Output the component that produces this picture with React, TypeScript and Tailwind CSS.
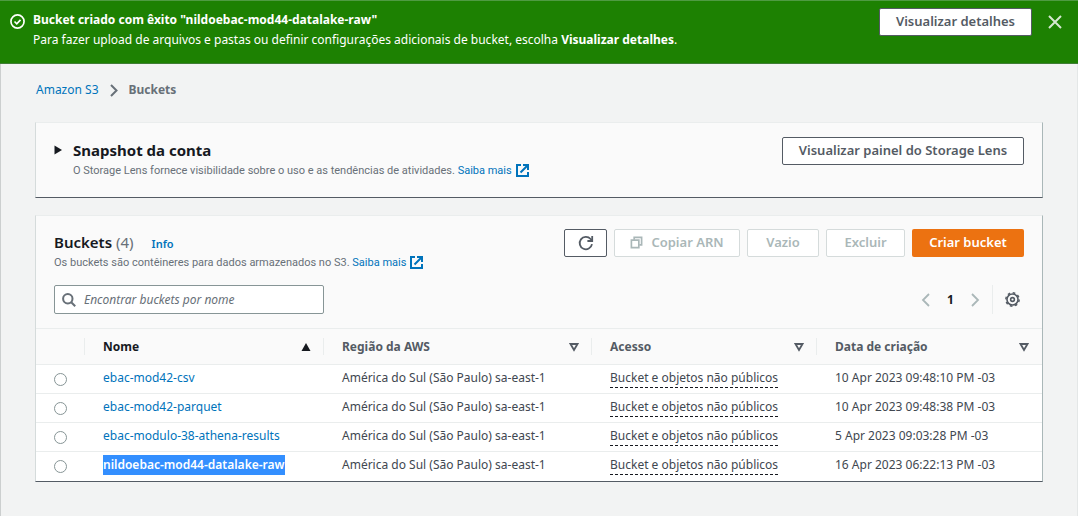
import type { ReactNode } from "react";

type Bucket = { name: string; created: string; selected?: boolean };

const buckets: Bucket[] = [
  { name: "ebac-mod42-csv", created: "10 Apr 2023 09:48:10 PM -03" },
  { name: "ebac-mod42-parquet", created: "10 Apr 2023 09:48:38 PM -03" },
  { name: "ebac-modulo-38-athena-results", created: "5 Apr 2023 09:03:28 PM -03" },
  { name: "nildoebac-mod44-datalake-raw", created: "16 Apr 2023 06:22:13 PM -03", selected: true },
];

function ExternalIcon() {
  return (
    <svg className="ml-1 inline-block size-[13px] align-[-3px]" viewBox="0 0 13 13" fill="none" stroke="currentColor" strokeWidth="2" aria-hidden="true">
      <path d="M5 1H1v11h11V8" />
      <path d="M7 1h5v5M12 1L4.5 8.5" />
    </svg>
  );
}

function LearnMore() {
  return (
    <a href="#saiba-mais" className="text-[#0073bb]">
      Saiba mais
      <ExternalIcon />
    </a>
  );
}

function Button({ children, disabled, className = "" }: { children: ReactNode; disabled?: boolean; className?: string }) {
  return (
    <button
      type="button"
      disabled={disabled}
      className={`flex h-7 shrink-0 items-center justify-center gap-2 rounded-xs border border-[#545b64] bg-white pb-[2px] text-[13px] font-semibold whitespace-nowrap text-[#545b64] disabled:border-[#d5dbdb] disabled:text-[#aab7b8] ${className}`}
    >
      {children}
    </button>
  );
}

function Card({ children }: { children: ReactNode }) {
  return (
    <section className="border-t border-r border-b border-l border-t-[#eaeded] border-r-[#aab7b8] border-b-[#545b64] border-l-[#d5dbdb] bg-[#fafafa]">
      {children}
    </section>
  );
}

function HeaderCell({ label, sorted, last }: { label: string; sorted?: boolean; last?: boolean }) {
  return (
    <th scope="col" className="p-0 text-left font-bold">
      <button
        type="button"
        className={`flex h-[17px] w-full items-center justify-between pl-[18px] ${last ? "pr-[13px]" : "border-r border-[#eaeded] pr-3"} ${sorted ? "text-[#16191f]" : "text-[#545b64]"}`}
      >
        {label}
        <svg className="size-[10px]" viewBox="0 0 10 10" aria-hidden="true">
          {sorted ? (
            <path d="M5 1L9.5 9H0.5z" fill="currentColor" />
          ) : (
            <path d="M1.5 2h7L5 8z" fill="none" stroke="currentColor" strokeWidth="1.8" />
          )}
        </svg>
      </button>
    </th>
  );
}

export default function App() {
  return (
    <div className="min-h-screen bg-white pr-1 font-['Noto_Sans','Open_Sans',sans-serif] text-[12px] leading-[20px] text-[#16191f]">
      <div className="flex h-16 items-start border-t border-b border-t-[#4f9b42] border-b-[#3f7d35] bg-[#1d8102] pt-[7px] pr-4 pl-[10px] text-white" role="status">
        <svg className="mt-[6px] size-[15px] shrink-0" viewBox="0 0 16 16" fill="none" stroke="currentColor" strokeWidth="1.8" aria-hidden="true">
          <circle cx="8" cy="8" r="7" />
          <path d="M4.8 8l2.4 2.4 4-4.2" />
        </svg>
        <div className="ml-2 grow pt-[2px] leading-[20px]">
          <p className="font-bold">Bucket criado com êxito "nildoebac-mod44-datalake-raw"</p>
          <p>
            Para fazer upload de arquivos e pastas ou definir configurações adicionais de bucket, escolha <b>Visualizar detalhes</b>.
          </p>
        </div>
        <Button className="w-[153px]">Visualizar detalhes</Button>
        <button type="button" aria-label="Fechar" className="ml-4 flex h-7 w-[14px] items-center justify-center text-[#d5e8d0]">
          <svg className="size-[14px]" viewBox="0 0 14 14" fill="none" stroke="currentColor" strokeWidth="2" aria-hidden="true">
            <path d="M1 1l12 12M13 1L1 13" />
          </svg>
        </button>
      </div>

      <main className="min-h-[calc(100vh-64px)] border-x border-l-[#cccfcf] border-r-[#e4e7e7] bg-[#f2f3f3] px-[34px] pt-4 pb-8">
        <nav aria-label="Navegação" className="mb-[22px] flex items-center gap-[11px] pl-px">
          <a href="#s3" className="text-[#0073bb]">Amazon S3</a>
          <svg className="h-[13px] w-2" viewBox="0 0 8 13" fill="none" stroke="#687078" strokeWidth="2" aria-hidden="true">
            <path d="M1 1l5.5 5.5L1 12" />
          </svg>
          <span className="font-bold text-[#687078]">Buckets</span>
        </nav>

        <Card>
          <div className="flex items-start justify-between px-[18px] pt-[14px] pb-[18px]">
            <div className="flex">
              <button type="button" aria-label="Expandir" className="mr-2 flex h-[26px] w-[11px] items-center">
                <svg className="h-[10px] w-2" viewBox="0 0 8 10" fill="#16191f" aria-hidden="true">
                  <path d="M0.5 0.5L8 5L0.5 9.5z" />
                </svg>
              </button>
              <div>
                <h2 className="text-[15px] leading-[26px] font-bold">Snapshot da conta</h2>
                <p className="font-['Roboto',sans-serif] text-[11px] leading-[16px] text-[#687078]">
                  O Storage Lens fornece visibilidade sobre o uso e as tendências de atividades. <LearnMore />
                </p>
              </div>
            </div>
            <Button className="w-[242px]">Visualizar painel do Storage Lens</Button>
          </div>
        </Card>

        <div className="h-[17px]" />

        <Card>
          <div className="flex items-start justify-between px-[18px] pt-[13px]">
            <div>
              <div className="flex items-baseline">
                <h2 className="text-[15px] leading-[26px] font-semibold">
                  Buckets <span className="font-normal text-[#687078]">(4)</span>
                </h2>
                <a href="#info" className="ml-[18px] text-[11px] font-semibold text-[#0073bb]">Info</a>
              </div>
              <p className="font-['Roboto',sans-serif] text-[11px] leading-[16px] text-[#687078]">
                Os buckets são contêineres para dados armazenados no S3. <LearnMore />
              </p>
            </div>
            <div className="flex gap-[7px]">
              <button type="button" aria-label="Atualizar" className="flex h-7 w-[43px] items-center justify-center rounded-xs border border-[#545b64] bg-white text-[#545b64]">
                <svg className="size-4" viewBox="0 0 16 16" fill="none" stroke="currentColor" strokeWidth="1.8" aria-hidden="true">
                  <path d="M14 9.2A6.2 6.2 0 1 1 12.6 4l1.4 1.6" />
                  <path d="M14.2 1v5H9.4" />
                </svg>
              </button>
              <Button disabled className="w-[126px]">
                <svg className="size-[13px]" viewBox="0 0 14 14" fill="none" stroke="currentColor" strokeWidth="1.8" aria-hidden="true">
                  <path d="M1.5 4.5h8v8h-8z" />
                  <path d="M4.5 4V1.5h8v8H10" />
                </svg>
                Copiar ARN
              </Button>
              <Button disabled className="w-[72px]">Vazio</Button>
              <Button disabled className="w-[79px]">Excluir</Button>
              <button type="button" className="h-7 w-[112px] rounded-xs bg-[#ec7211] pb-[2px] text-[13px] font-semibold text-white">Criar bucket</button>
            </div>
          </div>

          <div className="flex items-center justify-between px-[18px] pt-[14px] pb-[14px]">
            <label className="flex h-[29px] w-[270px] items-center gap-2 rounded-xs border border-[#879596] bg-white px-[7px]">
              <svg className="size-[14px] shrink-0" viewBox="0 0 14 14" fill="none" stroke="#687078" strokeWidth="2" aria-hidden="true">
                <circle cx="5.8" cy="5.8" r="4.7" />
                <path d="M9.2 9.2l4 4" />
              </svg>
              <input
                type="text"
                aria-label="Encontrar buckets por nome"
                placeholder="Encontrar buckets por nome"
                className="h-full min-w-0 grow text-[12px] leading-[20px] outline-none placeholder:text-[#687078] placeholder:italic"
              />
            </label>
            <div className="flex h-[29px] items-center">
              <button type="button" aria-label="Página anterior" className="text-[#aab7b8]">
                <svg className="h-[14px] w-[9px]" viewBox="0 0 9 14" fill="none" stroke="currentColor" strokeWidth="1.8" aria-hidden="true">
                  <path d="M8 1L2 7l6 6" />
                </svg>
              </button>
              <span className="w-[41px] text-center font-bold">1</span>
              <button type="button" aria-label="Próxima página" className="text-[#aab7b8]">
                <svg className="h-[14px] w-[9px]" viewBox="0 0 9 14" fill="none" stroke="currentColor" strokeWidth="1.8" aria-hidden="true">
                  <path d="M1 1l6 6-6 6" />
                </svg>
              </button>
              <button type="button" aria-label="Preferências" className="ml-3 flex h-full items-center border-l border-[#eaeded] pr-[4px] pl-3 text-[#545b64]">
                <svg className="size-[15px]" viewBox="0 0 16 16" fill="none" stroke="currentColor" aria-hidden="true">
                  <circle cx="8" cy="8" r="5.9" strokeWidth="1.7" />
                  <circle cx="8" cy="8" r="7.1" strokeWidth="1.6" strokeDasharray="2.79 2.79" />
                  <circle cx="8" cy="8" r="2" strokeWidth="1.7" />
                </svg>
              </button>
            </div>
          </div>

          <table className="w-full table-fixed border-collapse">
            <colgroup>
              <col className="w-[49px]" />
              <col className="w-[239px]" />
              <col className="w-[268px]" />
              <col className="w-[225px]" />
              <col />
            </colgroup>
            <thead>
              <tr className="h-9 border-y border-[#eaeded]">
                <th scope="col" className="p-0">
                  <div className="h-[17px] border-r border-[#eaeded]" />
                </th>
                <HeaderCell label="Nome" sorted />
                <HeaderCell label="Região da AWS" />
                <HeaderCell label="Acesso" />
                <HeaderCell label="Data de criação" last />
              </tr>
            </thead>
            <tbody>
              {buckets.map((b) => (
                <tr key={b.name} className="h-[29px] border-b border-[#eaeded] bg-white last:border-b-0">
                  <td className="p-0 pl-[18px]">
                    <input type="radio" name="bucket" aria-label={b.name} className="block size-[13px] appearance-none rounded-full border border-[#879596] bg-white" />
                  </td>
                  <td className="p-0 pb-[2px] pl-[18px] whitespace-nowrap">
                    <a href="#bucket" className={b.selected ? "inline-block bg-[#338fff] font-semibold text-white" : "text-[#0073bb]"}>{b.name}</a>
                  </td>
                  <td className="p-0 pb-[2px] pl-[18px] whitespace-nowrap text-[#414750]">América do Sul (São Paulo) sa-east-1</td>
                  <td className="p-0 pb-[2px] pl-[18px] whitespace-nowrap text-[#414750]">
                    <button type="button" className="block border-b border-dashed border-[#16191f] leading-[18px]">Bucket e objetos não públicos</button>
                  </td>
                  <td className="p-0 pb-[2px] pl-[18px] whitespace-nowrap text-[#414750]">{b.created}</td>
                </tr>
              ))}
            </tbody>
          </table>
        </Card>
      </main>
    </div>
  );
}
